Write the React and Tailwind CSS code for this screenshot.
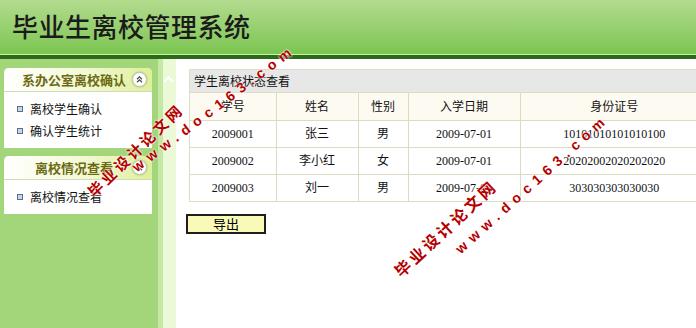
import React from 'react'

const cjk = { fontFamily: '"Noto Sans CJK SC", sans-serif' }
const cell = { fontFamily: '"Liberation Serif", "Noto Sans CJK SC", serif' }

function Toggle(){
  return (
    <span className="shrink-0 w-[15px] h-[15px] rounded-full bg-white border border-[#b8c8a0] flex items-center justify-center shadow-[0_0_2px_#9ab07a]">
      <svg width="9" height="9" viewBox="0 0 9 9" fill="none" stroke="#444" strokeWidth="1.2">
        <path d="M2 4.2 L4.5 1.8 L7 4.2" />
        <path d="M2 7.2 L4.5 4.8 L7 7.2" />
      </svg>
    </span>
  )
}

function Panel({title, items}){
  return (
    <div className="bg-white rounded-t-[5px] overflow-hidden">
      <div className="h-[24px] flex items-center bg-gradient-to-r from-white via-[#f4f9d8] to-[#dff09a] border-b border-[#cfdcb8] pl-[12px] pr-[5px]">
        <div className="flex-1 text-center whitespace-nowrap font-bold text-[13px] text-[#6b6a12]" style={cjk}>{title}</div>
        <Toggle />
      </div>
      <div className="py-[6px]">
        {items.map((it)=> (
          <div key={it} className="h-[22px] flex items-center pl-[13px] text-[12px] text-[#111] whitespace-nowrap" style={cjk}>
            <span className="w-[6px] h-[6px] border border-[#5b6f8a] bg-[#c9d6e6] mr-[7px]"></span>
            {it}
          </div>
        ))}
      </div>
    </div>
  )
}

function Watermark({x, y, deg, size, spacing, text, font}){
  return (
    <div
      className="absolute font-bold text-[#b50000] whitespace-nowrap leading-none origin-[0_100%] pointer-events-none [text-shadow:0_0_2px_#fff,0_0_2px_#fff]"
      style={{left: x, top: y - size, fontSize: size, letterSpacing: spacing, transform: `rotate(${deg}deg)`, fontFamily: font}}
    >{text}</div>
  )
}

const rows = [
  ['2009001', '张三', '男', '2009-07-01', '10101010101010100'],
  ['2009002', '李小红', '女', '2009-07-01', '20202002020202020'],
  ['2009003', '刘一', '男', '2009-07-01', '303030303030030'],
]

export default function App(){
  const zh = '"Noto Sans CJK SC", sans-serif'
  const en = '"Liberation Sans", "DejaVu Sans", sans-serif'
  return (
    <div className="relative w-[696px] h-[328px] overflow-hidden bg-white">
      <div className="h-[54px] bg-gradient-to-b from-[#b3db8e] to-[#7bc550] pl-[12px] pt-[9px]">
        <div className="text-[26px] leading-[34px] text-[#1b1b1b] font-medium tracking-[0.5px]" style={cjk}>毕业生离校管理系统</div>
      </div>
      <div className="h-px bg-[#c6f5a4]"></div>
      <div className="h-[4px] bg-[#2c6a1b]"></div>

      <div className="flex h-[269px]">
        <div className="w-[158px] shrink-0 bg-[#a3d57b] pt-[9px] pl-[4px] pr-[6px] space-y-[8px]">
          <Panel title="系办公室离校确认" items={['离校学生确认', '确认学生统计']} />
          <Panel title="离校情况查看" items={['离校情况查看']} />
        </div>
        <div className="w-[18px] shrink-0 flex">
          <div className="w-[5px] bg-[#c6e8a6]"></div>
          <div className="flex-1 bg-[#ecf9d6] pt-[17px]">
            <svg width="11" height="7" viewBox="0 0 11 7" fill="none" stroke="#fff" strokeWidth="2">
              <path d="M1 6 L5.5 1.5 L10 6" />
            </svg>
          </div>
        </div>
        <div className="flex-1 min-w-0 pl-[13px] pt-[10px]">
          <div className="w-[520px] border-t border-l border-[#dcdcc2]">
            <div className="h-[23px] bg-[#e7e7e7] border-b border-[#dcdcc2] flex items-center pl-[4px] text-[12px] text-[#111]" style={cjk}>学生离校状态查看</div>
            <table className="border-collapse text-[12px] text-[#111] text-center table-fixed w-full">
              <colgroup>
                <col className="w-[86px]" />
                <col className="w-[82px]" />
                <col className="w-[50px]" />
                <col className="w-[112px]" />
                <col />
              </colgroup>
              <thead>
                <tr className="h-[27px] bg-[#fdfbf1]" style={cjk}>
                  {['学号', '姓名', '性别', '入学日期', '身份证号'].map(h=> (
                    <th key={h} className="font-normal border-r border-b border-[#dcdcc2]">{h}</th>
                  ))}
                </tr>
              </thead>
              <tbody>
                {rows.map((r)=> (
                  <tr key={r[0]} className="h-[27px]" style={cell}>
                    {r.map((c, i)=> (
                      <td key={i} className="border-r border-b border-[#dcdcc2]">{c}</td>
                    ))}
                  </tr>
                ))}
              </tbody>
            </table>
          </div>
          <button className="mt-[12px] -ml-[3px] w-[80px] h-[20px] bg-[#fafab8] border-2 border-[#1e1e1e] text-[13px] leading-none text-black" style={cjk}>导出</button>
        </div>
      </div>

      <Watermark x={95} y={199} deg={-44} size={15} spacing={3} text="毕业设计论文网" font={zh} />
      <Watermark x={138} y={174} deg={-37} size={14} spacing={6} text="www.doc163.com" font={en} />
      <Watermark x={402} y={279} deg={-43} size={16} spacing={3} text="毕业设计论文网" font={zh} />
      <Watermark x={462} y={256} deg={-42} size={14} spacing={6} text="www.doc163.com" font={en} />
    </div>
  )
}
